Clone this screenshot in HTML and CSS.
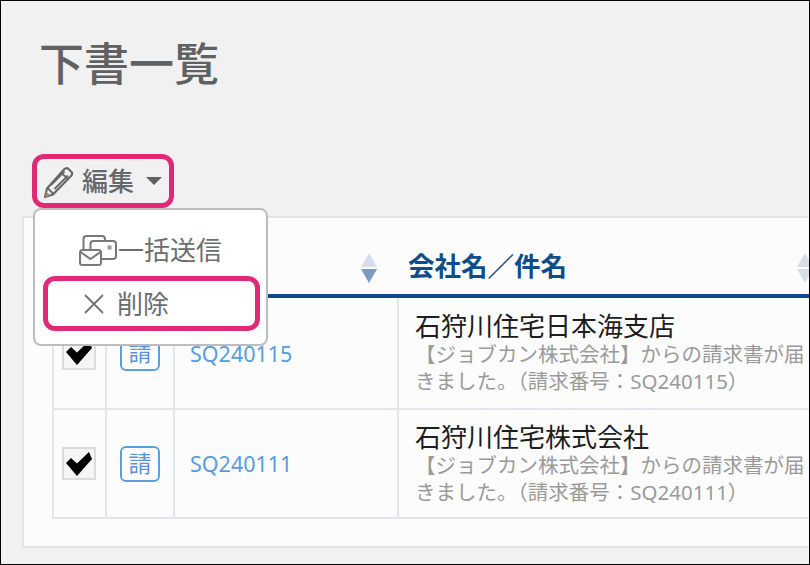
FILE: index.html
```html
<!DOCTYPE html>
<html lang="ja">
<head>
<meta charset="utf-8">
<title>下書一覧</title>
<link rel="stylesheet" href="styles.css">
</head>
<body>
<div class="screen">
  <h1 class="title">下書一覧</h1>
  <div class="toolbar">
    <button class="edit-btn" type="button">
      <svg class="pencil" viewBox="0 0 32 34" width="32" height="34" aria-hidden="true">
        <path d="M22 4.5 Q24 2.5 26 3.5 L29.5 7 Q31 9 29 11 L11 29.5 L3 32 L5 23.5 Z" fill="none" stroke="#66686b" stroke-width="2.2" stroke-linejoin="round"/>
        <path d="M19 7.5 L26.5 14.5 M6 23.5 L11.5 29 M9 20 L22.5 6.5 M12.5 24 L26 10.5" fill="none" stroke="#66686b" stroke-width="1.8"/>
        <path d="M3 32 L4.3 26.5 L8.5 30.5 Z" fill="#b08a68"/>
      </svg>
      <span class="edit-label">編集</span>
      <span class="caret"></span>
    </button>
    <div class="menu">
      <div class="menu-send">
        <svg class="send-icon" viewBox="0 0 39 31" width="39" height="31" aria-hidden="true">
          <path d="M4.500 14 V4 Q4.500 1 7.500 1 H23 Q26 1 26 4 V5.500" fill="none" stroke="#77797b" stroke-width="2"/>
          <path d="M11.500 14 V9 Q11.500 6 14.500 6 H34 Q37 6 37 9 V21 Q37 24 34 24 H23" fill="none" stroke="#77797b" stroke-width="2"/>
          <rect x="1" y="15" width="21" height="15" rx="2.500" fill="none" stroke="#77797b" stroke-width="2"/>
          <path d="M1.500 17 L11.500 24 L21.500 17" fill="none" stroke="#77797b" stroke-width="2"/>
          <rect x="28.500" y="10.500" width="4" height="4" fill="#999b9d"/>
        </svg>
        <span>一括送信</span>
      </div>
      <div class="menu-delete">
        <svg class="x-icon" viewBox="0 0 20 20" width="20" height="20" aria-hidden="true">
          <path d="M1 1 L19 19 M19 1 L1 19" stroke="#6f7173" stroke-width="1.800" fill="none"/>
        </svg>
        <span>削除</span>
      </div>
    </div>
  </div>
  <section class="panel">
    <table class="list">
      <colgroup>
        <col class="c-check"><col class="c-type"><col class="c-no"><col class="c-name"><col class="c-next">
      </colgroup>
      <thead>
        <tr>
          <th></th>
          <th></th>
          <th class="th-sort">
            <span class="sort"><i class="up"></i><i class="down strong"></i></span>
          </th>
          <th class="th-name">
            <span class="th-label">会社名／件名</span>
            <span class="sort"><i class="up"></i><i class="down"></i></span>
          </th>
          <th></th>
        </tr>
      </thead>
      <tbody>
        <tr>
          <td class="center"><span class="check"><svg viewBox="0 0 30 26" width="30" height="26" aria-hidden="true"><path d="M2 12 L7 7 L13 12.500 L25 1 L28 8 L13 25 Z" fill="#000"/></svg></span></td>
          <td class="center"><span class="badge">請</span></td>
          <td class="no"><a>SQ240115</a></td>
          <td class="name">
            <div class="company">石狩川住宅日本海支店</div>
            <div class="subject">【ジョブカン株式会社】からの請求書が届きました。（請求番号：SQ240115）</div>
          </td>
          <td></td>
        </tr>
        <tr>
          <td class="center"><span class="check"><svg viewBox="0 0 30 26" width="30" height="26" aria-hidden="true"><path d="M2 12 L7 7 L13 12.500 L25 1 L28 8 L13 25 Z" fill="#000"/></svg></span></td>
          <td class="center"><span class="badge">請</span></td>
          <td class="no"><a>SQ240111</a></td>
          <td class="name">
            <div class="company">石狩川住宅株式会社</div>
            <div class="subject">【ジョブカン株式会社】からの請求書が届きました。（請求番号：SQ240111）</div>
          </td>
          <td></td>
        </tr>
      </tbody>
    </table>
  </section>
</div>
</body>
</html>
```

FILE: styles.css
```css
* { box-sizing: border-box; }
html, body { margin: 0; padding: 0; }
body {
  width: 810px;
  height: 565px;
  overflow: hidden;
  font-family: "Noto Sans", "Noto Sans CJK JP", sans-serif;
}
.screen {
  width: 810px;
  height: 565px;
  border: 1px solid #000;
  background: #f1f1f1;
  overflow: hidden;
  padding: 0 0 0 21px;
}
.title {
  margin: 0;
  height: 153px;
  padding: 32px 0 0 17px;
  font-size: 45px;
  line-height: 62px;
  font-weight: 500;
  color: #5f6163;
}
.toolbar { position: relative; height: 62px; }
.edit-btn {
  display: flex;
  align-items: center;
  width: 142px;
  height: 54px;
  margin: 0 0 0 10px;
  padding: 0 0 0 5px;
  border: 5px solid #e02a77;
  border-radius: 12px;
  background: transparent;
  font: inherit;
}
.pencil { flex: none; margin-top: 1px; }
.edit-label {
  margin-left: 8px;
  font-size: 26px;
  line-height: 36px;
  font-weight: 500;
  color: #66696c;
}
.caret {
  margin-left: 12px;
  border-style: solid;
  border-width: 8px 8px 0;
  border-color: #5f6163 transparent transparent;
}
.menu {
  position: absolute;
  z-index: 2;
  left: 11px;
  top: 54px;
  width: 235px;
  height: 138px;
  padding: 18px 8px 0;
  background: #fff;
  border: 2px solid #bdbdbd;
  border-radius: 8px;
}
.menu-send {
  display: flex;
  align-items: center;
  height: 44px;
  padding-left: 36px;
  font-size: 26px;
  line-height: 36px;
  color: #6b6d70;
}
.send-icon { flex: none; }
.menu-delete {
  display: flex;
  align-items: center;
  width: 217px;
  height: 55px;
  margin-top: 4px;
  padding-left: 36px;
  border: 5px solid #e02a77;
  border-radius: 12px;
  font-size: 26px;
  line-height: 36px;
  color: #6b6d70;
}
.x-icon { flex: none; margin-right: 13px; }
.panel {
  width: 820px;
  height: 332px;
  padding: 0 0 0 28px;
  background: #fcfcfc;
  border: 2px solid #e3e3e3;
  border-right: 0;
}
.list {
  width: 801px;
  table-layout: fixed;
  border-collapse: separate;
  border-spacing: 0;
}
.c-check { width: 55px; }
.c-type { width: 68px; }
.c-no { width: 224px; }
.c-name { width: 422px; }
.c-next { width: 32px; }
.list th {
  height: 80px;
  padding: 0;
  border-bottom: 4px solid #0b4a86;
  position: relative;
  text-align: left;
}
.th-name { padding-left: 9px !important; }
.th-label {
  font-size: 26.500px;
  line-height: 34px;
  font-weight: 700;
  color: #0f4d8a;
  position: relative;
  top: 10px;
}
.sort {
  position: absolute;
  right: 22px;
  top: 35px;
  display: flex;
  flex-direction: column;
  gap: 2px;
}
.th-name .sort { right: 8px; }
.sort i {
  display: block;
  width: 0;
  height: 0;
  border-left: 8px solid transparent;
  border-right: 8px solid transparent;
}
.sort .up { border-bottom: 14px solid #d6dfe9; }
.sort .down { border-top: 14px solid #d6dfe9; }
.sort .down.strong { border-top-color: #7c9ac0; }
.list td {
  height: 109px;
  padding: 0;
  border-bottom: 2px solid #e2e6ea;
  border-right: 2px solid #e2e6ea;
  vertical-align: middle;
}
.list td:first-child { border-left: 2px solid #e2e6ea; }
.list td:last-child { border-right: 0; }
.list tbody tr:first-child td { height: 112px; }
.center { text-align: center; }
.check {
  display: inline-flex;
  align-items: center;
  justify-content: center;
  width: 34px;
  height: 33px;
  margin-left: -1px;
  vertical-align: middle;
  background: #f5f5f5;
  border: 2px solid #dcdcdc;
}
.check svg { flex: none; }
.badge {
  display: inline-block;
  width: 40px;
  height: 36px;
  vertical-align: middle;
  border: 2px solid #5a9fe0;
  border-radius: 6px;
  font-size: 23px;
  line-height: 31px;
  text-align: center;
  color: #5b92dc;
  background: #fff;
}
.no { padding: 1px 0 0 15px !important; }
.no a {
  font-size: 21.500px;
  line-height: 30px;
  color: #5a9be0;
}
.name { padding: 0 0 0 16px !important; }
.company {
  font-size: 26px;
  line-height: 30px;
  color: #1d1d1d;
}
.subject {
  width: 400px;
  font-size: 20.500px;
  line-height: 27px;
  color: #9a9a9a;
}
```
